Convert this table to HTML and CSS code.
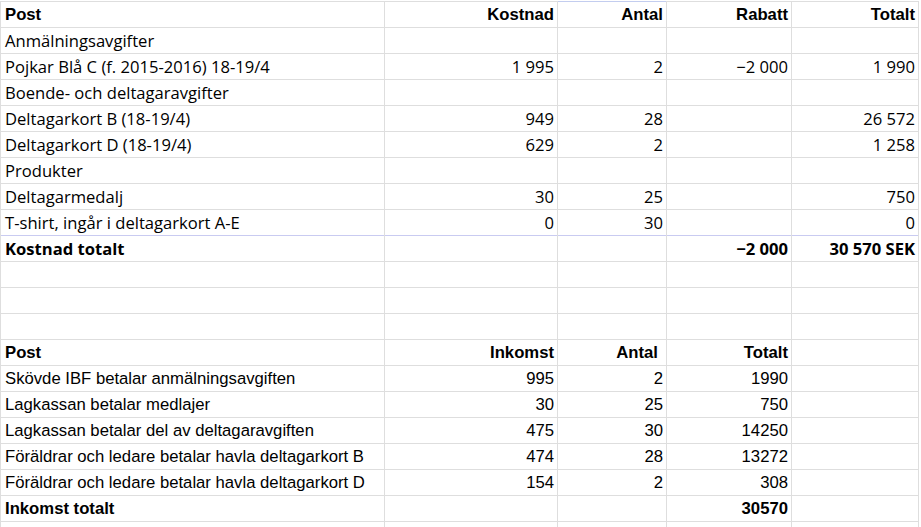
FILE: index.html
```html
<!DOCTYPE html>
<html lang="sv">
<head>
<meta charset="utf-8">
<title>Kostnader</title>
<link rel="stylesheet" href="styles.css">
</head>
<body>
<div class="sheet">
  <div class="row hdr">
    <div class="c">Post</div><div class="c n">Kostnad</div><div class="c n sel-top">Antal</div><div class="c n">Rabatt</div><div class="c n">Totalt</div>
  </div>
  <div class="row">
    <div class="c">Anmälningsavgifter</div><div class="c"></div><div class="c"></div><div class="c"></div><div class="c"></div>
  </div>
  <div class="row">
    <div class="c">Pojkar Blå C (f. 2015-2016) 18-19/4</div><div class="c n">1&nbsp;995</div><div class="c n">2</div><div class="c n">&minus;2&nbsp;000</div><div class="c n">1&nbsp;990</div>
  </div>
  <div class="row">
    <div class="c">Boende- och deltagaravgifter</div><div class="c"></div><div class="c"></div><div class="c"></div><div class="c"></div>
  </div>
  <div class="row">
    <div class="c">Deltagarkort B (18-19/4)</div><div class="c n">949</div><div class="c n">28</div><div class="c"></div><div class="c n">26&nbsp;572</div>
  </div>
  <div class="row">
    <div class="c">Deltagarkort D (18-19/4)</div><div class="c n">629</div><div class="c n">2</div><div class="c"></div><div class="c n">1&nbsp;258</div>
  </div>
  <div class="row">
    <div class="c">Produkter</div><div class="c"></div><div class="c"></div><div class="c"></div><div class="c"></div>
  </div>
  <div class="row">
    <div class="c">Deltagarmedalj</div><div class="c n">30</div><div class="c n">25</div><div class="c"></div><div class="c n">750</div>
  </div>
  <div class="row">
    <div class="c">T-shirt, ingår i deltagarkort A-E</div><div class="c n">0</div><div class="c n">30</div><div class="c"></div><div class="c n">0</div>
  </div>
  <div class="row sum mark-top">
    <div class="c">Kostnad totalt</div><div class="c"></div><div class="c"></div><div class="c n">&minus;2&nbsp;000</div><div class="c n">30&nbsp;570 SEK</div>
  </div>
  <div class="row">
    <div class="c"></div><div class="c"></div><div class="c"></div><div class="c"></div><div class="c"></div>
  </div>
  <div class="row">
    <div class="c"></div><div class="c"></div><div class="c"></div><div class="c"></div><div class="c"></div>
  </div>
  <div class="row">
    <div class="c"></div><div class="c"></div><div class="c"></div><div class="c"></div><div class="c"></div>
  </div>
  <div class="row hdr arial">
    <div class="c">Post</div><div class="c n">Inkomst</div><div class="c n trail">Antal</div><div class="c n">Totalt</div><div class="c"></div>
  </div>
  <div class="row arial">
    <div class="c">Skövde IBF betalar anmälningsavgiften</div><div class="c n">995</div><div class="c n">2</div><div class="c n">1990</div><div class="c"></div>
  </div>
  <div class="row arial">
    <div class="c">Lagkassan betalar medlajer</div><div class="c n">30</div><div class="c n">25</div><div class="c n">750</div><div class="c"></div>
  </div>
  <div class="row arial">
    <div class="c">Lagkassan betalar del av deltagaravgiften</div><div class="c n">475</div><div class="c n">30</div><div class="c n">14250</div><div class="c"></div>
  </div>
  <div class="row arial">
    <div class="c">Föräldrar och ledare betalar havla deltagarkort B</div><div class="c n">474</div><div class="c n">28</div><div class="c n">13272</div><div class="c"></div>
  </div>
  <div class="row arial">
    <div class="c">Föräldrar och ledare betalar havla deltagarkort D</div><div class="c n">154</div><div class="c n">2</div><div class="c n">308</div><div class="c"></div>
  </div>
  <div class="row hdr arial">
    <div class="c">Inkomst totalt</div><div class="c"></div><div class="c"></div><div class="c n">30570</div><div class="c"></div>
  </div>
  <div class="row">
    <div class="c"></div><div class="c"></div><div class="c"></div><div class="c"></div><div class="c"></div>
  </div>
</div>
</body>
</html>
```
FILE: styles.css
```css
html, body {
  margin: 0;
  padding: 0;
  background: #ffffff;
}

body {
  padding-top: 1px;
  overflow: hidden;
}

.sheet {
  display: grid;
  grid-template-columns: 383px 172px 108px 124px 126px;
  grid-auto-rows: 25px;
  gap: 1px;
  width: fit-content;
  background: #dedede;
  border: 1px solid #dedede;
  font-family: "Open Sans", "Liberation Sans", sans-serif;
  font-size: 16.6px;
  color: #000;
}

.row {
  display: contents;
}

.c {
  background: #ffffff;
  line-height: 25px;
  padding: 0 3px 0 4px;
  white-space: nowrap;
  overflow: hidden;
}

.n {
  text-align: right;
  padding-right: 3px;
}

.hdr .c {
  font-family: "Liberation Sans", Arial, sans-serif;
  font-weight: 700;
  font-size: 16.7px;
}

.arial .c {
  font-family: "Liberation Sans", Arial, sans-serif;
  font-size: 16.7px;
}

.sum .c {
  font-weight: 700;
}

.trail {
  padding-right: 8px;
}

.mark-top .c {
  box-shadow: 0 -1px 0 #c9cbf1;
}

.sel-top {
  box-shadow: 0 -1px 0 #c3cdef;
}
```
